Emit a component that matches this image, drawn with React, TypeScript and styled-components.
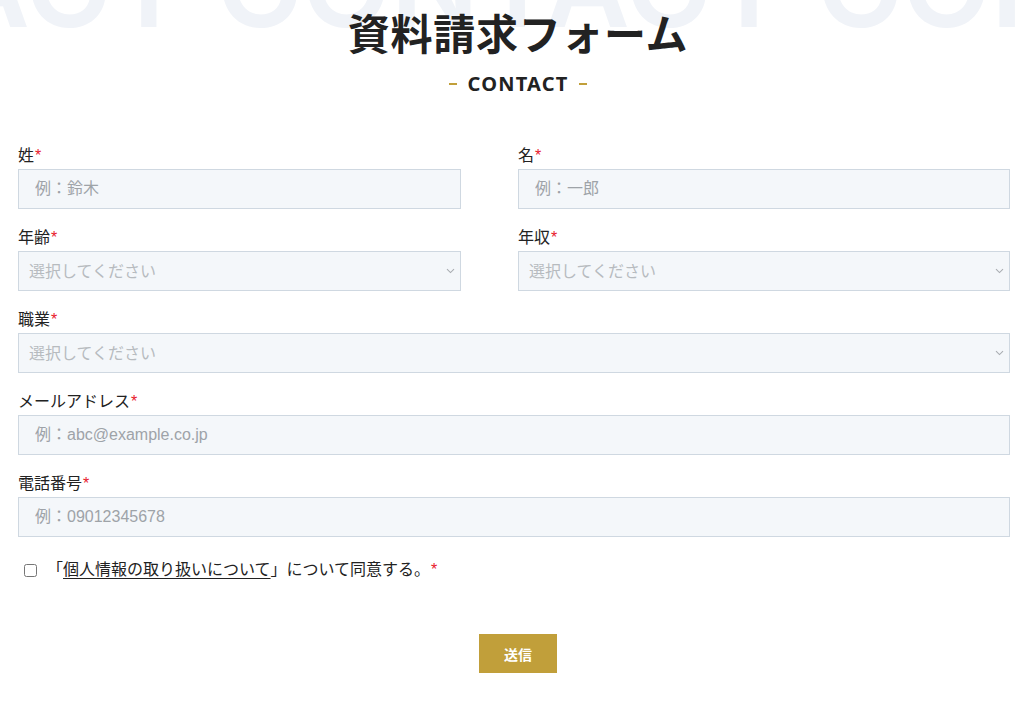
import React from "react";
import styled, { createGlobalStyle } from "styled-components";

const Global = createGlobalStyle`
  html, body { margin: 0; padding: 0; background: #ffffff; }
  body {
    font-family: "Liberation Sans", "Noto Sans CJK JP", sans-serif;
    color: #222222;
    overflow: hidden;
  }
  * { box-sizing: border-box; }
  input::placeholder { color: #9ea3a8; opacity: 1; }
`;

const Page = styled.div`
  position: relative;
  width: 1032px;
  height: 707px;
  overflow: hidden;
`;

const Watermark = styled.div`
  position: absolute;
  top: -73px;
  left: -384px;
  font-family: "Inter", "Noto Sans", sans-serif;
  font-weight: 600;
  font-size: 116px;
  line-height: 1;
  white-space: nowrap;
  color: #f0f3f8;
  pointer-events: none;
  user-select: none;
`;

const Content = styled.div`
  position: relative;
  padding: 7px 22px 0 18px;
  display: flex;
  flex-direction: column;
`;

const Header = styled.header`
  display: flex;
  flex-direction: column;
  align-items: center;
  padding-left: 8px;
`;

const Title = styled.h1`
  margin: 0;
  font-family: "Noto Sans CJK JP", sans-serif;
  font-weight: 700;
  font-size: 42px;
  line-height: 50px;
  color: #222222;
  letter-spacing: 0.7px;
`;

const Sub = styled.div`
  margin-top: 12px;
  display: flex;
  align-items: center;
  gap: 11px;
  font-family: "Noto Sans", sans-serif;
  font-weight: 700;
  font-size: 20px;
  line-height: 30px;
  letter-spacing: 1.2px;
  color: #222222;
`;

const Dash = styled.span`
  display: block;
  width: 8px;
  height: 2px;
  background: #c19f3a;
`;

const Form = styled.form`
  margin-top: 46px;
  display: grid;
  grid-template-columns: 443px 1fr;
  column-gap: 57px;
  row-gap: 18px;
`;

const Field = styled.div<{ $full?: boolean }>`
  display: flex;
  flex-direction: column;
  gap: 2px;
  grid-column: ${(p) => (p.$full ? "1 / -1" : "auto")};
`;

const Label = styled.label`
  font-family: "Liberation Sans", "Noto Sans CJK JP", sans-serif;
  font-size: 16px;
  line-height: 22px;
  color: #222222;
`;

const Req = styled.span`
  color: #e8202a;
  font-size: 16px;
  margin-left: 1px;
`;

const TextInput = styled.input`
  width: 100%;
  height: 40px;
  margin: 0;
  padding: 0 16px;
  border: 1px solid #cfd8e1;
  border-radius: 0;
  background: #f4f7fa;
  font-family: "Liberation Sans", "Noto Sans CJK JP", sans-serif;
  font-size: 16px;
  color: #222222;
  outline: none;
`;

const SelectWrap = styled.div`
  position: relative;
  width: 100%;
`;

const Select = styled.select`
  width: 100%;
  height: 40px;
  margin: 0;
  padding: 0 24px 0 10px;
  border: 1px solid #cfd8e1;
  border-radius: 0;
  background: #f4f7fa;
  appearance: none;
  -webkit-appearance: none;
  font-family: "Liberation Sans", "Noto Sans CJK JP", sans-serif;
  font-size: 16px;
  color: #b7bbbf;
  outline: none;
`;

const Chevron = styled.svg`
  position: absolute;
  right: 6px;
  top: 17px;
  width: 9px;
  height: 6px;
  pointer-events: none;
`;

const Agree = styled.div`
  grid-column: 1 / -1;
  margin-top: 3px;
  padding-left: 6px;
  display: flex;
  align-items: center;
  gap: 10px;
  font-family: "Liberation Sans", "Noto Sans CJK JP", sans-serif;
  font-size: 16px;
  line-height: 24px;
  color: #222222;
`;

const Check = styled.input`
  margin: 0;
  width: 13px;
  height: 13px;
`;

const Link = styled.a`
  color: #222222;
  text-decoration: underline;
  text-underline-offset: 3px;
`;

const Actions = styled.div`
  grid-column: 1 / -1;
  display: flex;
  justify-content: center;
  padding-left: 8px;
  margin-top: 34px;
`;

const Submit = styled.button`
  width: 78px;
  height: 39px;
  border: none;
  border-radius: 0;
  background: #c19f3a;
  color: #ffffff;
  font-family: "Noto Sans CJK JP", sans-serif;
  font-weight: 700;
  font-size: 14px;
  cursor: pointer;
`;

function Dropdown() {
  return (
    <SelectWrap>
      <Select defaultValue="">
        <option value="" disabled>
          選択してください
        </option>
      </Select>
      <Chevron viewBox="0 0 9 6">
        <path d="M1 1.2 L4.5 4.6 L8 1.2" fill="none" stroke="#a9adb2" strokeWidth="1.1" />
      </Chevron>
    </SelectWrap>
  );
}

export default function App() {
  return (
    <>
      <Global />
      <Page>
        <Watermark aria-hidden>CONTACT CONTACT CONTACT</Watermark>
        <Content>
          <Header>
            <Title>資料請求フォーム</Title>
            <Sub>
              <Dash />
              CONTACT
              <Dash />
            </Sub>
          </Header>
          <Form onSubmit={(e) => e.preventDefault()}>
            <Field>
              <Label>
                姓<Req>*</Req>
              </Label>
              <TextInput placeholder="例：鈴木" />
            </Field>
            <Field>
              <Label>
                名<Req>*</Req>
              </Label>
              <TextInput placeholder="例：一郎" />
            </Field>
            <Field>
              <Label>
                年齢<Req>*</Req>
              </Label>
              <Dropdown />
            </Field>
            <Field>
              <Label>
                年収<Req>*</Req>
              </Label>
              <Dropdown />
            </Field>
            <Field $full>
              <Label>
                職業<Req>*</Req>
              </Label>
              <Dropdown />
            </Field>
            <Field $full>
              <Label>
                メールアドレス<Req>*</Req>
              </Label>
              <TextInput placeholder="例：abc@example.co.jp" />
            </Field>
            <Field $full>
              <Label>
                電話番号<Req>*</Req>
              </Label>
              <TextInput placeholder="例：09012345678" />
            </Field>
            <Agree>
              <Check type="checkbox" />
              <span>
                「<Link href="#">個人情報の取り扱いについて</Link>」について同意する。<Req>*</Req>
              </span>
            </Agree>
            <Actions>
              <Submit type="submit">送信</Submit>
            </Actions>
          </Form>
        </Content>
      </Page>
    </>
  );
}
